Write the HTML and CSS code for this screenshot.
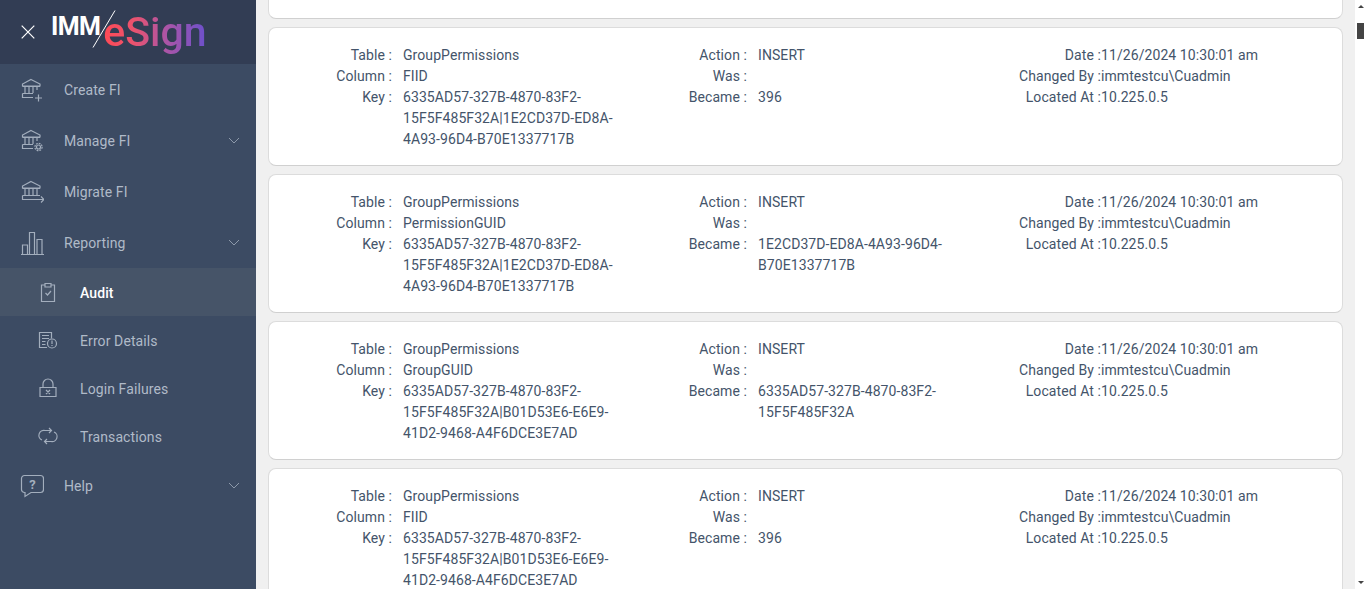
FILE: index.html
```html
<!DOCTYPE html>
<html lang="en">
<head>
  <meta charset="UTF-8">
  <title>IMM eSign - Audit</title>
  <link rel="stylesheet" href="styles.css">
</head>
<body>
  <aside class="sidebar">
    <div class="brand">
      <svg class="close-icon" width="14" height="14" viewBox="0 0 14 14"><path d="M.7.7l12.6 12.6M13.3.7L.7 13.3"/></svg>
      <div class="logo">
        <span class="logo-imm">IMM</span>
        <svg class="logo-slash" width="24" height="38" viewBox="0 0 24 38"><path d="M23 .5L1 37.5"/></svg>
        <span class="logo-esign">eSign</span>
      </div>
    </div>
    <nav class="menu">
      <a class="menu-item">
        <svg class="icon" width="24" height="24" viewBox="0 0 24 24"><path d="M11 1.500L20 6v2H2.500V6zM2.500 8.500h17.500M5 9v6M9 9v6M13 9v6M17 9v3M2.500 15.500H13M2.500 15.500v4H13M15 20h7M18.500 16.500v7"/></svg>
        <span>Create FI</span>
      </a>
      <a class="menu-item">
        <svg class="icon" width="24" height="24" viewBox="0 0 24 24"><path d="M11 1.500L20 6v2H2.500V6zM2.500 8.500h17.500M5 9v6M9 9v6M13 9v6M17 9v3M2.500 15.500H13M2.500 15.500v4H13"/><circle cx="18.500" cy="18" r="2"/><circle cx="18.500" cy="18" r="3.600" stroke-dasharray="1.800 1"/></svg>
        <span>Manage FI</span>
        <svg class="chevron" width="12" height="7" viewBox="0 0 12 7"><path d="M1 1l5 5 5-5"/></svg>
      </a>
      <a class="menu-item">
        <svg class="icon" width="24" height="24" viewBox="0 0 24 24"><path d="M11 1.500L20 6v2H2.500V6zM2.500 8.500h17.500M5 9v6M9 9v6M13 9v6M17 9v6M2.500 15.500H20M2.500 15.500v4H24M21 16.500l3 3-3 3"/></svg>
        <span>Migrate FI</span>
      </a>
      <a class="menu-item">
        <svg class="icon" width="24" height="24" viewBox="0 0 24 24"><path d="M1 23.500h23M2.500 23V14h5v9M9.500 23V1.500h5V23M17 23V8.500h5V23"/></svg>
        <span>Reporting</span>
        <svg class="chevron" width="12" height="7" viewBox="0 0 12 7"><path d="M1 1l5 5 5-5"/></svg>
      </a>
      <a class="menu-item sub active">
        <svg class="icon" width="24" height="24" viewBox="0 0 24 24"><path d="M9 5H5.500v16.500h13V5H15M9 3.500h6V7H9zM9.500 13l2 2 3.500-4"/></svg>
        <span>Audit</span>
      </a>
      <a class="menu-item sub">
        <svg class="icon" width="24" height="24" viewBox="0 0 24 24"><path d="M11 19.500H3.500v-15h12v6M6 7.500h7M6 10.500h7M6 13.500h3.500M6 16.500h3.500M16 12.500v3.500M16 17v1"/><circle cx="16" cy="15.500" r="4.500"/></svg>
        <span>Error Details</span>
      </a>
      <a class="menu-item sub">
        <svg class="icon" width="24" height="24" viewBox="0 0 24 24"><path d="M4 11.500h16v9H4zM7 11V8a5 5 0 0 1 10 0v3M10 14l4 4M14 14l-4 4"/></svg>
        <span>Login Failures</span>
      </a>
      <a class="menu-item sub">
        <svg class="icon" width="24" height="24" viewBox="0 0 24 24"><path d="M15 6.500H9a5 5 0 0 0-3 9.500M13 4l2.500 2.500L13 9M9 17.500h6a5 5 0 0 0 3-9.500M11 20l-2.500-2.500L11 15"/></svg>
        <span>Transactions</span>
      </a>
      <a class="menu-item">
        <svg class="icon" width="24" height="24" viewBox="0 0 24 24"><path d="M4.500 1.500h16a3 3 0 0 1 3 3v11a3 3 0 0 1-3 3H11l-6 4v-4h-.5a3 3 0 0 1-3-3v-11a3 3 0 0 1 3-3z"/><text class="help-mark" x="12.500" y="14.500" text-anchor="middle">?</text></svg>
        <span>Help</span>
        <svg class="chevron" width="12" height="7" viewBox="0 0 12 7"><path d="M1 1l5 5 5-5"/></svg>
      </a>
    </nav>
  </aside>

  <main class="content">
    <div class="card card-cut"></div>

    <div class="card">
      <div class="label">Table :</div><div class="value">GroupPermissions</div>
      <div class="label">Action :</div><div class="value">INSERT</div>
      <div class="label">Date :</div><div class="value tight">11/26/2024 10:30:01 am</div>
      <div class="label">Column :</div><div class="value">FIID</div>
      <div class="label">Was :</div><div class="value"></div>
      <div class="label">Changed By :</div><div class="value tight">immtestcu\Cuadmin</div>
      <div class="label">Key :</div><div class="value">6335AD57-327B-4870-83F2-15F5F485F32A|1E2CD37D-ED8A-4A93-96D4-B70E1337717B</div>
      <div class="label">Became :</div><div class="value">396</div>
      <div class="label">Located At :</div><div class="value tight">10.225.0.5</div>
    </div>

    <div class="card">
      <div class="label">Table :</div><div class="value">GroupPermissions</div>
      <div class="label">Action :</div><div class="value">INSERT</div>
      <div class="label">Date :</div><div class="value tight">11/26/2024 10:30:01 am</div>
      <div class="label">Column :</div><div class="value">PermissionGUID</div>
      <div class="label">Was :</div><div class="value"></div>
      <div class="label">Changed By :</div><div class="value tight">immtestcu\Cuadmin</div>
      <div class="label">Key :</div><div class="value">6335AD57-327B-4870-83F2-15F5F485F32A|1E2CD37D-ED8A-4A93-96D4-B70E1337717B</div>
      <div class="label">Became :</div><div class="value">1E2CD37D-ED8A-4A93-96D4-B70E1337717B</div>
      <div class="label">Located At :</div><div class="value tight">10.225.0.5</div>
    </div>

    <div class="card">
      <div class="label">Table :</div><div class="value">GroupPermissions</div>
      <div class="label">Action :</div><div class="value">INSERT</div>
      <div class="label">Date :</div><div class="value tight">11/26/2024 10:30:01 am</div>
      <div class="label">Column :</div><div class="value">GroupGUID</div>
      <div class="label">Was :</div><div class="value"></div>
      <div class="label">Changed By :</div><div class="value tight">immtestcu\Cuadmin</div>
      <div class="label">Key :</div><div class="value">6335AD57-327B-4870-83F2-15F5F485F32A|B01D53E6-E6E9-41D2-9468-A4F6DCE3E7AD</div>
      <div class="label">Became :</div><div class="value">6335AD57-327B-4870-83F2-15F5F485F32A</div>
      <div class="label">Located At :</div><div class="value tight">10.225.0.5</div>
    </div>

    <div class="card">
      <div class="label">Table :</div><div class="value">GroupPermissions</div>
      <div class="label">Action :</div><div class="value">INSERT</div>
      <div class="label">Date :</div><div class="value tight">11/26/2024 10:30:01 am</div>
      <div class="label">Column :</div><div class="value">FIID</div>
      <div class="label">Was :</div><div class="value"></div>
      <div class="label">Changed By :</div><div class="value tight">immtestcu\Cuadmin</div>
      <div class="label">Key :</div><div class="value">6335AD57-327B-4870-83F2-15F5F485F32A|B01D53E6-E6E9-41D2-9468-A4F6DCE3E7AD</div>
      <div class="label">Became :</div><div class="value">396</div>
      <div class="label">Located At :</div><div class="value tight">10.225.0.5</div>
    </div>
  </main>

  <div class="scrollbar">
    <div class="arrow-up"></div>
    <div class="thumb"></div>
    <div class="arrow-down"></div>
  </div>
</body>
</html>
```

FILE: styles.css
```css
html, body {
  margin: 0;
  padding: 0;
  height: 100%;
  overflow: hidden;
}
body {
  display: flex;
  font-family: Roboto, sans-serif;
  font-size: 14px;
  line-height: 21px;
  letter-spacing: 0.08px;
  color: #44546a;
  background: #f0f0f0;
}

/* sidebar */
.sidebar {
  flex: 0 0 256px;
  background: #3c4b63;
}
.brand {
  height: 64px;
  display: flex;
  align-items: center;
  padding-left: 21px;
  background: #323d54;
}
.close-icon {
  flex: none;
}
.close-icon path {
  fill: none;
  stroke: #fff;
  stroke-width: 1.2;
}
.logo {
  position: relative;
  display: flex;
  align-items: flex-start;
  height: 64px;
  margin-left: 16px;
}
.logo-imm {
  margin-top: 15px;
  font-size: 25px;
  line-height: 24px;
  font-weight: 700;
  letter-spacing: -0.6px;
  color: #fff;
}
.logo-slash {
  position: absolute;
  left: 41px;
  top: 10px;
}
.logo-slash path {
  fill: none;
  stroke: #fff;
  stroke-width: 1;
}
.logo-esign {
  margin: 8px 0 0 3px;
  font-size: 41px;
  line-height: 48px;
  font-weight: 500;
  letter-spacing: 0;
  background: linear-gradient(90deg, #ff4a55 0%, #e9536f 30%, #a955a8 62%, #6b50cc 100%);
  -webkit-background-clip: text;
  background-clip: text;
  color: transparent;
}
.menu-item {
  height: 51px;
  display: flex;
  align-items: center;
  gap: 20px;
  padding-left: 20px;
  letter-spacing: 0.1px;
  color: #b0bac8;
}
.menu-item span {
  padding-top: 2px;
}
.menu-item.sub {
  height: 48px;
  padding-left: 36px;
}
.menu-item.active {
  background: #465468;
  color: #fff;
  font-weight: 500;
}
.icon {
  flex: none;
}
.icon path, .icon circle {
  fill: none;
  stroke: #a3aebd;
  stroke-width: 1.2;
}
.help-mark {
  font-size: 13px;
  font-weight: 700;
  fill: #a3aebd;
}
.chevron {
  margin-left: auto;
  margin-right: 16px;
}
.chevron path {
  fill: none;
  stroke: #8d99aa;
  stroke-width: 1;
}

/* audit list */
.content {
  flex: 1;
  min-width: 0;
  padding: 0 12px;
  overflow: hidden;
}
.card {
  display: grid;
  grid-template-columns: 123px 236px 119px 236px 118px 1fr;
  align-content: start;
  height: 139px;
  box-sizing: border-box;
  margin-bottom: 8px;
  padding: 17px 0 0;
  background: #fff;
  border: 1px solid #dcdcdc;
  border-bottom-color: #d0d0d0;
  border-radius: 8px;
}
.card-cut {
  height: 19px;
  padding: 0;
  border-top: none;
  border-radius: 0 0 8px 8px;
}
.label {
  text-align: right;
}
.value {
  padding-left: 11px;
  min-height: 21px;
}
.value.tight {
  padding-left: 0;
}

/* scrollbar is drawn, the page itself does not scroll */
.scrollbar {
  flex: 0 0 11px;
  display: flex;
  flex-direction: column;
  align-items: center;
  background: #fff;
}
.arrow-up {
  margin-top: 5px;
  border: 3px solid transparent;
  border-top: none;
  border-bottom-color: #444;
}
.thumb {
  width: 7px;
  height: 16px;
  margin-top: 15px;
  background: #444;
}
.arrow-down {
  margin-top: auto;
  margin-bottom: 5px;
  border: 3px solid transparent;
  border-bottom: none;
  border-top-color: #444;
}
```
